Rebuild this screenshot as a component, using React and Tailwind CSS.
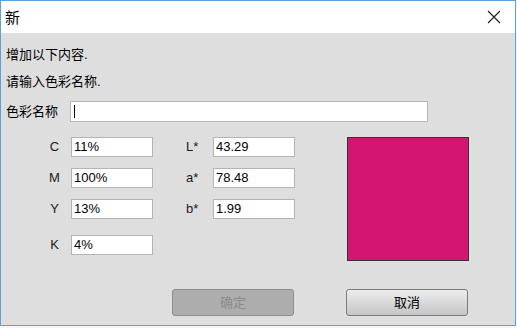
import React from 'react';

const font = { fontFamily: '"Liberation Sans", "Noto Sans CJK SC", sans-serif' };

const Field = ({ label, value, wide }) => (
  <div className="flex items-center">
    <div
      className={
        wide
          ? 'w-[27px] text-left text-[13px] text-[#1a1a1a]'
          : 'mr-[6px] w-[21px] text-center text-[13px] text-[#1a1a1a]'
      }
    >
      {label}
    </div>
    <div className="h-[20px] w-[82px] border border-[#b4b4b4] bg-white pl-[2px] text-[13px] leading-[18px] text-black">
      {value}
    </div>
  </div>
);

const App = () => {
  return (
    <div className="h-[328px] w-[517px] bg-[#f3f7fb]" style={font}>
      <div className="flex h-[326px] w-[516px] flex-col border border-[#5b9fdc] bg-[#dedede]">
        {/* Title bar */}
        <div className="flex h-[32px] items-center justify-between bg-white pl-[4px] pr-[13px]">
          <span className="text-[15px] leading-none text-black">新</span>
          <svg width="14" height="14" viewBox="0 0 14 14" className="mr-[1px]">
            <path d="M1 1L13 13M13 1L1 13" stroke="#222" strokeWidth="1.2" />
          </svg>
        </div>

        {/* Body */}
        <div className="flex flex-1 flex-col pl-[5px]">
          <div className="mt-[13px] text-[13px] leading-[18px] text-black">增加以下内容.</div>
          <div className="mt-[9px] text-[13px] leading-[18px] text-black">请输入色彩名称.</div>

          <div className="mt-[10px] flex items-center">
            <span className="w-[64px] text-[13px] text-black">色彩名称</span>
            <div className="flex h-[21px] w-[358px] items-center border border-[#b8b8b8] bg-white pl-[3px]">
              <div className="h-[13px] w-[1px] bg-black" />
            </div>
          </div>

          <div className="mt-[15px] flex">
            <div className="ml-[38px] flex flex-col">
              <div className="flex gap-[33px]">
                <div className="flex flex-col gap-[11px]">
                  <Field label="C" value="11%" />
                  <Field label="M" value="100%" />
                  <Field label="Y" value="13%" />
                </div>
                <div className="flex flex-col gap-[11px]">
                  <Field label="L*" value="43.29" wide />
                  <Field label="a*" value="78.48" wide />
                  <Field label="b*" value="1.99" wide />
                </div>
              </div>
              <div className="mt-[16px]">
                <Field label="K" value="4%" />
              </div>
            </div>
            <div className="ml-[52px] h-[124px] w-[122px] border border-[#333] bg-[#d3166f]" />
          </div>

          <div className="mt-[28px] flex">
            <button
              disabled
              className="ml-[166px] h-[27px] w-[122px] rounded-[3px] border border-[#8f8f8f] bg-[#adadad] text-[13px] text-[#8a8a8a]"
            >
              确定
            </button>
            <button className="ml-[52px] h-[27px] w-[122px] rounded-[3px] border border-[#7a7a7a] bg-gradient-to-b from-[#ececec] to-[#c6c6c6] text-[13px] text-black">
              取消
            </button>
          </div>
        </div>
      </div>
    </div>
  );
};

export default App;
